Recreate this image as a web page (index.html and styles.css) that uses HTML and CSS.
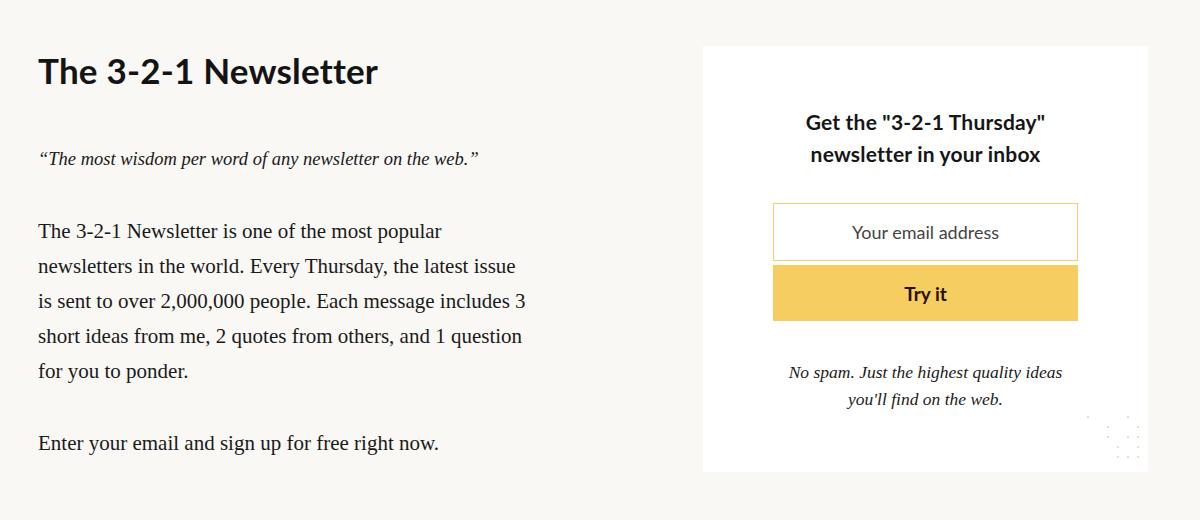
FILE: index.html
```html
<!DOCTYPE html>
<html lang="en">
<head>
  <meta charset="UTF-8" />
  <meta name="viewport" content="width=device-width, initial-scale=1" />
  <title>The 3-2-1 Newsletter</title>
  <link rel="stylesheet" href="styles.css">
</head>
<body>
  <section class="signup">
    <div class="intro">
      <h1>The 3-2-1 Newsletter</h1>
      <p class="quote">“The most wisdom per word of any newsletter on the web.”</p>
      <p>The 3-2-1 Newsletter is one of the most popular newsletters in the world. Every Thursday, the latest issue is sent to over 2,000,000 people. Each message includes 3 short ideas from me, 2 quotes from others, and 1 question for you to ponder.</p>
      <p>Enter your email and sign up for free right now.</p>
    </div>

    <div class="card">
      <h2>Get the "3-2-1 Thursday" newsletter in your inbox</h2>
      <form class="form">
        <input type="email" placeholder="Your email address">
        <button type="button">Try it</button>
      </form>
      <p class="note">No spam. Just the highest quality ideas you'll find on the web.</p>
      <svg class="dots" width="52" height="42" viewBox="0 0 52 42">
        <g fill="#e4e0cf">
          <rect x="0" y="0" width="2" height="2"/>
          <rect x="40" y="0" width="2" height="2"/>
          <rect x="20" y="10" width="2" height="2"/>
          <rect x="50" y="10" width="2" height="2"/>
          <rect x="20" y="20" width="2" height="2"/>
          <rect x="40" y="20" width="2" height="2"/>
          <rect x="50" y="20" width="2" height="2"/>
          <rect x="30" y="30" width="2" height="2"/>
          <rect x="50" y="30" width="2" height="2"/>
          <rect x="30" y="40" width="2" height="2"/>
          <rect x="40" y="40" width="2" height="2"/>
          <rect x="50" y="40" width="2" height="2"/>
        </g>
      </svg>
    </div>
  </section>
</body>
</html>
```

FILE: styles.css
```css
body {
  margin: 0;
  background-color: #f9f8f5;
  color: #1a1a1a;
  font-family: "Liberation Serif", serif;
}
.signup {
  display: flex;
  justify-content: space-between;
  padding: 46px 52px 48px 38px;
}
.intro {
  width: 492px;
  padding-top: 3px;
}
h1 {
  margin: 0 0 51px;
  font-family: Lato, "Open Sans", sans-serif;
  font-size: 35px;
  font-weight: 700;
  letter-spacing: 0.2px;
  color: #141414;
}
.intro p {
  margin: 0 0 37px;
  font-size: 21px;
  line-height: 35px;
}
.intro .quote {
  font-size: 18.5px;
  font-style: italic;
}
.card {
  position: relative;
  width: 445px;
  height: 426px;
  box-sizing: border-box;
  background-color: white;
  padding: 60px 60px 0;
  text-align: center;
}
h2 {
  margin: 0 0 33px;
  font-family: Lato, "Open Sans", sans-serif;
  font-size: 21px;
  font-weight: 700;
  letter-spacing: 0.2px;
  line-height: 32px;
  color: #161616;
}
.form {
  display: flex;
  flex-direction: column;
  gap: 4px;
  width: 305px;
  margin: 0 auto;
}
.form input {
  height: 58px;
  box-sizing: border-box;
  border: 1px solid #f2cf73;
  background: white;
  font-family: Lato, "Open Sans", sans-serif;
  font-size: 18px;
  text-align: center;
  color: #444;
  outline: none;
}
.form input::placeholder {
  color: #444;
}
.form button {
  height: 56px;
  border: none;
  background-color: #f6cd60;
  font-family: Lato, "Open Sans", sans-serif;
  font-size: 19px;
  font-weight: 700;
  color: #2a0f02;
  cursor: pointer;
}
.note {
  margin: 38px 20px 0;
  font-style: italic;
  font-size: 17.5px;
  line-height: 27px;
}
.dots {
  position: absolute;
  right: 9px;
  bottom: 14px;
}
```
